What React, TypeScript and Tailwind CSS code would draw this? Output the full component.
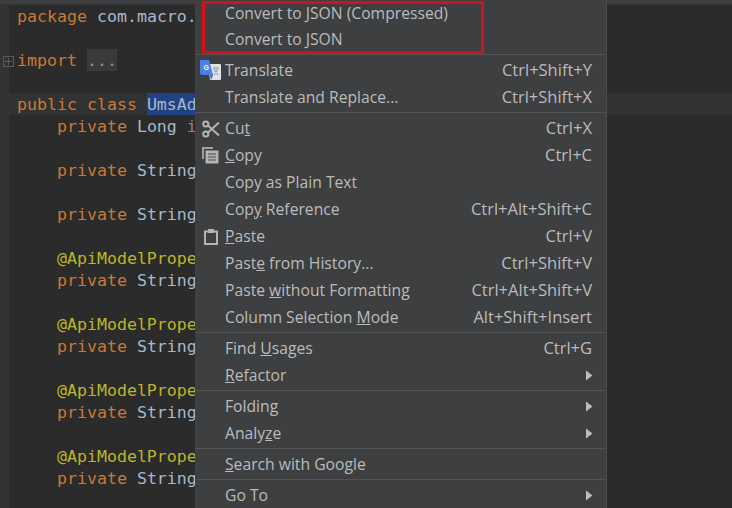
const kw = "text-[#cc7832]";
const plain = "text-[#a9b7c6]";
const ann = "text-[#bbb529]";

function Code({ children, current }: { children?: React.ReactNode; current?: boolean }) {
  return (
    <div className={`h-[22px] leading-[24px] ${current ? "bg-[#323232]" : ""}`}>
      <div className="w-[186px] h-[22px] pl-[8px] overflow-hidden whitespace-pre">{children}</div>
    </div>
  );
}

function Field({ type }: { type: string }) {
  return (
    <Code>
      <span className={kw}>{"    private "}</span>
      <span className={plain}>{type}</span>
    </Code>
  );
}

function Annotated() {
  return (
    <>
      <Code>
        <span className={ann}>{"    @ApiModelProperty"}</span>
      </Code>
      <Field type="String name;" />
      <Code />
    </>
  );
}

function Sep() {
  return (
    <div className="h-[4px] pt-px">
      <div className="h-px w-full bg-[#525354]" />
    </div>
  );
}

function Arrow() {
  return (
    <svg width="8" height="11" viewBox="0 0 8 11" className="mr-[-1px]">
      <path d="M1 0.5 L7.5 5.5 L1 10.5 Z" fill="#bdbdbd" />
    </svg>
  );
}

function GoogleTranslate() {
  return (
    <svg width="21" height="21" viewBox="0 0 21 21">
      <path d="M8 4 H20 a1 1 0 0 1 1 1 V19 a1 1 0 0 1 -1 1 H10 Z" fill="#dfe3e8" />
      <path d="M13 8 h6 M16 7 v2 M14 15 l4 -6 M14 9 l4 6" stroke="#8aa0b8" strokeWidth="1.1" fill="none" />
      <path d="M1 0 H9 L13 15 H2 a2 2 0 0 1 -2 -2 V1 a1 1 0 0 1 1 -1 Z" fill="#4a80e8" />
      <path d="M10 15 H13 L11 20 Z" fill="#3a62bb" />
      <text x="3.5" y="10" fontSize="7" fontWeight="700" fill="#fff" fontFamily="'Liberation Sans', sans-serif">G</text>
    </svg>
  );
}

function ScissorsIcon() {
  return (
    <svg width="18" height="18" viewBox="0 0 18 18" fill="none" stroke="#b4b4b4" strokeWidth="2">
      <circle cx="3.8" cy="4" r="2.6" />
      <circle cx="3.8" cy="14" r="2.6" />
      <path d="M6 5.5 L17 15.5 M6 12.5 L17 2.5" />
    </svg>
  );
}

function CopyIcon() {
  return (
    <svg width="17" height="17" viewBox="0 0 17 17">
      <path d="M0 0 H11 V2 H2 V12 H0 Z" fill="#a0a0a0" />
      <rect x="3.5" y="3.5" width="13" height="13" fill="#b4b4b4" />
      <path d="M6 7 h8 M6 10 h8 M6 13 h8" stroke="#4a4a4a" strokeWidth="1.2" />
    </svg>
  );
}

function PasteIcon() {
  return (
    <svg width="14" height="16" viewBox="0 0 14 16" fill="none">
      <rect x="1" y="2.5" width="12" height="12.5" stroke="#b4b4b4" strokeWidth="2" />
      <rect x="4" y="0" width="6" height="4" fill="#b4b4b4" />
    </svg>
  );
}

function Item({
  children,
  keys,
  icon,
  arrow,
  first,
}: {
  children: React.ReactNode;
  keys?: string;
  icon?: React.ReactNode;
  arrow?: boolean;
  first?: boolean;
}) {
  return (
    <div className={`${first ? "h-[26px] pt-px" : "h-[27px]"} flex items-center pr-[14px] whitespace-pre`}>
      <div className="w-[30px] flex justify-center items-center shrink-0 pl-[1px]">{icon}</div>
      <div className="flex-1">{children}</div>
      {keys && <div className="text-[16.5px]">{keys}</div>}
      {arrow && <Arrow />}
    </div>
  );
}

export default function App() {
  return (
    <div className="relative w-[732px] h-[508px] overflow-hidden bg-[#2b2b2b] font-['DejaVu_Sans_Mono',monospace] text-[16.6px]">
      <div className="h-[5px] bg-[#3c3f41] border-b border-[#323232]" />
      <div className="flex">
        <div className="w-[9px] h-[503px] bg-[#313335] shrink-0" />
        <div className="flex-1">
          <Code>
            <span className={kw}>package </span>
            <span className={plain}>com.macro.mall.model;</span>
          </Code>
          <Code />
          <Code>
            <span className={kw}>import </span>
            <span className="inline-block h-[22px] text-[#8f8f8f] bg-[#3a3a3a]">...</span>
          </Code>
          <Code />
          <Code current>
            <span className={kw}>public class </span>
            <span className="inline-block h-[22px] text-[#a9b7c6] bg-[#214283]">UmsAdmin</span>
          </Code>
          <Code>
            <span className={kw}>{"    private "}</span>
            <span className={plain}>Long </span>
            <span className="text-[#9876aa]">id;</span>
          </Code>
          <Code />
          <Field type="String name;" />
          <Code />
          <Field type="String name;" />
          <Code />
          <Annotated />
          <Annotated />
          <Annotated />
          <Annotated />
        </div>
      </div>

      {/* fold marker */}
      <div className="absolute left-[3px] top-[56px] w-[11px] h-[11px] border border-[#5a5a5a] flex items-center justify-center">
        <div className="w-[7px] h-px bg-[#5a5a5a]" />
        <div className="absolute w-px h-[7px] bg-[#5a5a5a]" />
      </div>

      {/* context menu */}
      <div className="absolute left-[195px] top-0 w-[412px] h-[508px] bg-[#3e3f41] border-r border-[#4a4c4e] text-[#bbbbbb] text-[15.7px] font-['Open_Sans',sans-serif]">
        <Item first>Convert to JSON (Compressed)</Item>
        <Item>Convert to JSON</Item>
        <Sep />
        <Item keys="Ctrl+Shift+Y" icon={<GoogleTranslate />}>Translate</Item>
        <Item keys="Ctrl+Shift+X">Translate and Replace...</Item>
        <Sep />
        <Item keys="Ctrl+X" icon={<ScissorsIcon />}>Cu<u>t</u></Item>
        <Item keys="Ctrl+C" icon={<CopyIcon />}><u>C</u>opy</Item>
        <Item>Copy as Plain Text</Item>
        <Item keys="Ctrl+Alt+Shift+C">Cop<u>y</u> Reference</Item>
        <Item keys="Ctrl+V" icon={<PasteIcon />}><u>P</u>aste</Item>
        <Item keys="Ctrl+Shift+V">Past<u>e</u> from History...</Item>
        <Item keys="Ctrl+Alt+Shift+V">Paste <u>w</u>ithout Formatting</Item>
        <Item keys="Alt+Shift+Insert">Column Selection <u>M</u>ode</Item>
        <Sep />
        <Item keys="Ctrl+G">Find <u>U</u>sages</Item>
        <Item arrow><u>R</u>efactor</Item>
        <Sep />
        <Item arrow>Folding</Item>
        <Item arrow>Analy<u>z</u>e</Item>
        <Sep />
        <Item><u>S</u>earch with Google</Item>
        <Sep />
        <Item arrow>Go To</Item>

        {/* red highlight */}
        <div className="absolute left-[7px] top-[1px] w-[282px] h-[53px] border-[3px] border-[#d5101c]" />
      </div>
    </div>
  );
}
